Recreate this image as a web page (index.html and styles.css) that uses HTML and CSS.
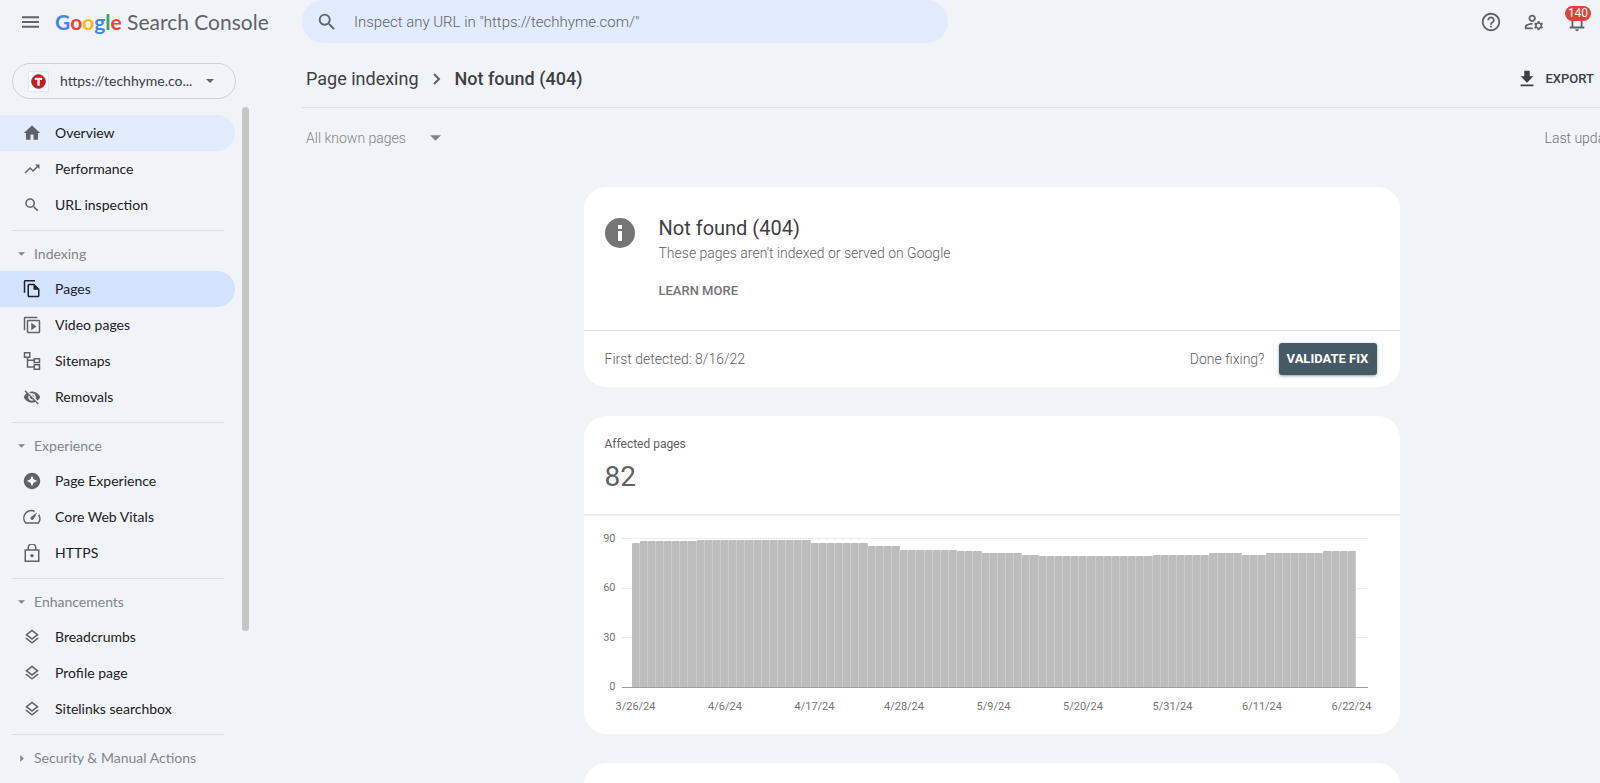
FILE: index.html
```html
<!DOCTYPE html>
<html lang="en">
<head>
<meta charset="utf-8">
<title>Page indexing - Not found (404)</title>
<link rel="stylesheet" href="styles.css">
</head>
<body>
<svg class="sprite" aria-hidden="true">
  <symbol id="search" viewBox="0 0 24 24"><path d="M15.5 14h-.79l-.28-.27A6.471 6.471 0 0 0 16 9.5 6.5 6.5 0 1 0 9.5 16c1.61 0 3.09-.59 4.23-1.57l.27.28v.79l5 4.99L20.49 19l-4.99-5zm-6 0C7.01 14 5 11.99 5 9.5S7.01 5 9.5 5 14 7.01 14 9.5 11.99 14 9.5 14z"/></symbol>
  <symbol id="layers" viewBox="0 0 24 24"><path d="M11.99 18.54l-7.37-5.73L3 14.07l9 7 9-7-1.63-1.27zM12 16l7.36-5.73L21 9l-9-7-9 7 1.63 1.27L12 16zm0-11.47L17.74 9 12 13.47 6.26 9 12 4.53z"/></symbol>
  <symbol id="down" viewBox="0 0 10 5"><path d="M0 0h10L5 5z"/></symbol>
  <symbol id="right" viewBox="0 0 5 10"><path d="M0 0v10l5-5z"/></symbol>
</svg>

<div class="app">
  <aside class="sidebar">
    <div class="brand">
      <button class="icon-button" aria-label="Main menu"><svg class="icon-menu" viewBox="0 0 18 12"><path d="M0 0h18v2H0zM0 5h18v2H0zM0 10h18v2H0z"/></svg></button>
      <a class="brand-link" href="#"><span class="google"><span class="blue">G</span><span class="red">o</span><span class="yellow">o</span><span class="blue">g</span><span class="green">l</span><span class="red">e</span></span> <span>Search Console</span></a>
    </div>
    <button class="property">
      <span class="favicon"><svg viewBox="0 0 16 16"><circle cx="8" cy="8" r="7.300" fill="#d8141c" stroke="#8f2a2c"/><path d="M4 4h8v2.500H9.300V12.500H6.700V6.500H4z" fill="#fff"/></svg></span>
      <span class="property-name">https://techhyme.co...</span>
      <svg class="caret"><use href="#down"/></svg>
    </button>
    <div class="nav-area">
      <nav class="nav">
        <a class="nav-item hover" href="#"><svg class="icon" viewBox="0 0 24 24"><path d="M10 21v-7h4v7h6v-9h3L12 2 1 12h3v9z"/></svg>Overview</a>
        <a class="nav-item" href="#"><svg class="icon" viewBox="0 0 24 24"><path d="M16 6l2.290 2.290-4.880 4.880-4-4L2 16.590 3.410 18l6-6 4 4 6.300-6.290L22 12V6z"/></svg>Performance</a>
        <a class="nav-item" href="#"><svg class="icon"><use href="#search"/></svg>URL inspection</a>

        <button class="nav-group"><span class="arrow"><svg class="tri"><use href="#down"/></svg></span>Indexing</button>
        <a class="nav-item active" href="#"><svg class="icon" viewBox="0 0 24 24"><path fill-rule="evenodd" d="M16 0H3C1.900 0 1 .9 1 2v15h2V2h13zM15 5H8C6.900 5 6 5.900 6 7v14c0 1.100.9 2 2 2h12c1.100 0 2-.9 2-2V12zM8 21V7h6v6h6v8z"/></svg>Pages</a>
        <a class="nav-item" href="#"><svg class="icon" viewBox="0 0 24 24"><path fill-rule="evenodd" d="M19 1H3C1.900 1 1 1.900 1 3v16h2V3h16zM7 5h14c1.100 0 2 .9 2 2v14c0 1.100-.9 2-2 2H7c-1.100 0-2-.9-2-2V7c0-1.100.9-2 2-2zm0 2v14h14V7zM11 9v10l7-5z"/></svg>Video pages</a>
        <a class="nav-item" href="#"><svg class="icon" viewBox="0 0 24 24"><path fill="none" stroke="currentColor" stroke-width="2" d="M2 1h7v6H2zM15 9h7v5h-7zM15 17h7v6h-7zM6 7v13h9M6 11h9"/></svg>Sitemaps</a>
        <a class="nav-item" href="#"><svg class="icon" viewBox="0 0 24 24"><path d="M12 7c2.760 0 5 2.240 5 5 0 .65-.13 1.260-.36 1.830l2.920 2.920c1.510-1.260 2.700-2.890 3.430-4.750-1.730-4.390-6-7.500-11-7.500-1.400 0-2.740.25-3.980.7l2.160 2.160C10.740 7.130 11.350 7 12 7zM2 4.270l2.280 2.280.46.46C3.080 8.300 1.780 10.020 1 12c1.730 4.390 6 7.500 11 7.500 1.550 0 3.030-.3 4.380-.84l.42.42L19.730 22 21 20.730 3.270 3 2 4.270zM7.530 9.800l1.550 1.550c-.05.21-.08.43-.08.65 0 1.660 1.340 3 3 3 .22 0 .44-.03.65-.08l1.550 1.550c-.67.33-1.410.53-2.200.53-2.760 0-5-2.240-5-5 0-.79.2-1.530.53-2.200zm4.310-.78l3.150 3.150.02-.16c0-1.660-1.340-3-3-3l-.17.01z"/></svg>Removals</a>

        <button class="nav-group"><span class="arrow"><svg class="tri"><use href="#down"/></svg></span>Experience</button>
        <a class="nav-item" href="#"><svg class="icon" viewBox="0 0 24 24"><path fill-rule="evenodd" d="M12 1a11 11 0 1 0 0 22 11 11 0 0 0 0-22zm0 4l2.200 4.800L19 12l-4.800 2.200L12 19l-2.200-4.800L5 12l4.800-2.200z"/></svg>Page Experience</a>
        <a class="nav-item" href="#"><svg class="icon" viewBox="0 0 24 24"><path fill="none" stroke="currentColor" stroke-width="2" d="M15.500 4.500A10 10 0 0 0 3.500 20h17a10 10 0 0 0 .5-11"/><path d="M19 6l-5 9a2.300 2.300 0 1 1-3.500-3z"/></svg>Core Web Vitals</a>
        <a class="nav-item" href="#"><svg class="icon" viewBox="0 0 24 24"><path fill="none" stroke="currentColor" stroke-width="2" d="M3 8h18v15H3zM7 8V5a5 5 0 0 1 10 0v3"/><circle cx="12" cy="15.500" r="2.300"/></svg>HTTPS</a>

        <button class="nav-group"><span class="arrow"><svg class="tri"><use href="#down"/></svg></span>Enhancements</button>
        <a class="nav-item" href="#"><svg class="icon"><use href="#layers"/></svg>Breadcrumbs</a>
        <a class="nav-item" href="#"><svg class="icon"><use href="#layers"/></svg>Profile page</a>
        <a class="nav-item" href="#"><svg class="icon"><use href="#layers"/></svg>Sitelinks searchbox</a>

        <button class="nav-group"><span class="arrow"><svg class="tri-right"><use href="#right"/></svg></span>Security &amp; Manual Actions</button>
      </nav>
      <div class="scrollbar"></div>
    </div>
  </aside>

  <main class="main">
    <header class="topbar">
      <label class="search"><svg class="icon-large"><use href="#search"/></svg><input type="text" aria-label="Inspect URL" placeholder='Inspect any URL in "https://techhyme.com/"'></label>
      <div class="tools">
        <button class="icon-button" aria-label="Help"><svg class="icon-tool" viewBox="0 0 24 24"><path d="M11 18h2v-2h-2v2zm1-16C6.480 2 2 6.480 2 12s4.480 10 10 10 10-4.480 10-10S17.520 2 12 2zm0 18c-4.410 0-8-3.590-8-8s3.590-8 8-8 8 3.590 8 8-3.590 8-8 8zm0-14c-2.210 0-4 1.790-4 4h2c0-1.100.9-2 2-2s2 .9 2 2c0 2-3 1.750-3 5h2c0-2.250 3-2.500 3-5 0-2.210-1.790-4-4-4z"/></svg></button>
        <button class="icon-button" aria-label="User settings"><svg class="icon-tool" viewBox="0 0 24 24"><path d="M4 18v-.65c0-.34.16-.66.41-.81C6.100 15.530 8.030 15 10 15c.03 0 .05 0 .08.01.1-.7.3-1.370.59-1.980-.22-.02-.44-.03-.67-.03-2.420 0-4.680.67-6.610 1.820-.88.52-1.390 1.500-1.390 2.530V20h9.260c-.42-.6-.75-1.280-.97-2H4zM10 12c2.210 0 4-1.790 4-4s-1.790-4-4-4-4 1.790-4 4 1.790 4 4 4zm0-6c1.100 0 2 .9 2 2s-.9 2-2 2-2-.9-2-2 .9-2 2-2zM20.750 16c0-.22-.03-.42-.06-.63l1.140-1.010-1-1.730-1.450.49c-.32-.27-.68-.48-1.080-.63L18 11h-2l-.3 1.490c-.4.15-.76.36-1.080.63l-1.450-.49-1 1.730 1.140 1.010c-.03.21-.06.41-.06.63s.03.42.06.63l-1.140 1.010 1 1.730 1.450-.49c.32.27.68.48 1.080.63L16 21h2l.3-1.490c.4-.15.76-.36 1.080-.63l1.450.49 1-1.730-1.140-1.010c.03-.21.06-.41.06-.63zM17 18c-1.100 0-2-.9-2-2s.9-2 2-2 2 .9 2 2-.9 2-2 2z"/></svg></button>
        <button class="icon-button" aria-label="Notifications"><svg class="icon-tool" viewBox="0 0 24 24"><path d="M12 22c1.100 0 2-.9 2-2h-4c0 1.100.9 2 2 2zm6-5v-6c0-3.070-1.630-5.640-4.500-6.320V4c0-.83-.67-1.500-1.500-1.500s-1.500.67-1.500 1.500v.68C7.640 5.360 6 7.920 6 11v6H4v2h16v-2zm-2 0H8v-6c0-2.480 1.510-4.500 4-4.500s4 2.020 4 4.500z"/></svg><span class="badge">140</span></button>
      </div>
    </header>

    <div class="titlebar">
      <a class="crumb" href="#">Page indexing</a>
      <svg class="chevron" viewBox="0 0 8 12"><path fill="none" stroke="currentColor" stroke-width="2" d="M1 1l5 5-5 5"/></svg>
      <h1 class="title">Not found (404)</h1>
      <button class="export"><svg class="icon-tool" viewBox="0 0 24 24"><path d="M19 9h-4V3H9v6H5l7 7 7-7zM5 18v2h14v-2H5z"/></svg>EXPORT</button>
    </div>

    <div class="content">
      <div class="filters">
        <button class="filter">All known pages<svg class="filter-caret"><use href="#down"/></svg></button>
        <span class="updated">Last updated: 6/22/24</span>
      </div>

      <div class="cards">
        <section class="card">
          <div class="summary">
            <svg class="info" viewBox="0 0 30 30"><circle cx="15" cy="15" r="15"/><path fill="#fff" d="M13 7h4v4h-4zM13 13h4v10h-4z"/></svg>
            <div>
              <h2 class="card-title">Not found (404)</h2>
              <p class="card-text">These pages aren't indexed or served on Google</p>
              <a class="learn" href="#">LEARN MORE</a>
            </div>
          </div>
          <div class="actions">
            <span>First detected: 8/16/22</span>
            <span class="done">Done fixing?</span>
            <button class="validate">VALIDATE FIX</button>
          </div>
        </section>

        <section class="card">
          <div class="metric">
            <h2 class="metric-name">Affected pages</h2>
            <p class="metric-value">82</p>
          </div>
          <div class="chart">
            <div class="y-axis"><span>90</span><span>60</span><span>30</span><span>0</span></div>
            <div class="grid-lines"><i></i><i></i><i></i><i></i></div>
            <div class="bars" id="bars"></div>
            <div class="x-axis"><span>3/26/24</span><span>4/6/24</span><span>4/17/24</span><span>4/28/24</span><span>5/9/24</span><span>5/20/24</span><span>5/31/24</span><span>6/11/24</span><span>6/22/24</span></div>
          </div>
        </section>

        <section class="card next"></section>
      </div>
    </div>
  </main>
</div>
<script src="chart.js"></script>
</body>
</html>
```
FILE: styles.css
```css
* { box-sizing: border-box; }

body {
  margin: 0;
  background: #f0f3f8;
  color: #3c4043;
  font: 14px/20px Roboto, sans-serif;
}

button {
  margin: 0;
  padding: 0;
  border: 0;
  background: none;
  color: inherit;
  font: inherit;
  text-align: left;
  cursor: pointer;
}

a { color: inherit; text-decoration: none; }
h1, h2, p { margin: 0; font-weight: 400; }
svg { display: block; flex: none; fill: currentColor; }
.sprite { position: absolute; width: 0; height: 0; }

.app {
  display: grid;
  grid-template-columns: 302px minmax(0, 1fr);
  height: 100vh;
  overflow: hidden;
}

/* Sidebar */
.sidebar {
  display: flex;
  flex-direction: column;
  min-height: 0;
  font-family: Lato, sans-serif;
}

.brand {
  display: flex;
  align-items: center;
  gap: 16px;
  height: 44px;
  padding-left: 22px;
  color: #5f6368;
}
.icon-button { position: relative; }
.icon-menu { width: 17px; height: 12px; }
.brand-link {
  font-size: 21px;
  line-height: 28px;
  white-space: nowrap;
}
.google { font-weight: 700; }
.blue { color: #4285f4; }
.red { color: #ea4335; }
.yellow { color: #fbbc05; }
.green { color: #34a853; }

.property {
  display: flex;
  align-items: center;
  width: 224px;
  height: 36px;
  margin: 19px 0 8px 12px;
  padding: 0 21px 0 15px;
  border: 1px solid #cdd0d5;
  border-radius: 18px;
}
.favicon {
  padding: 2px;
  border: 1px solid #e4e6e8;
  background: #fff;
}
.favicon svg { width: 15px; height: 15px; }
.property-name { flex: 1; padding-left: 11px; }
.caret { width: 8px; height: 4px; color: #5f6368; }

.nav-area { display: flex; flex: 1; min-height: 0; gap: 7px; }
.nav {
  width: 235px;
  padding-top: 8px;
  overflow: hidden;
  color: #202124;
}
.nav-item {
  display: flex;
  align-items: center;
  gap: 14px;
  height: 36px;
  padding-left: 23px;
  border-radius: 0 18px 18px 0;
}
.nav-item.hover { background: #e1ebfc; }
.nav-item.active { background: #d3e3fd; }
.icon { width: 18px; height: 18px; color: #5f6368; }
.active .icon { color: #202124; }
.nav-group {
  display: flex;
  align-items: center;
  width: 212px;
  height: 41px;
  margin: 7px 0 0 12px;
  padding: 6px 0 0 6px;
  border-top: 1px solid #dcdfe3;
  color: #80868b;
}
.arrow { display: flex; width: 16px; }
.tri { width: 7px; height: 4px; }
.tri-right { width: 4px; height: 7px; margin-left: 2px; }
.scrollbar {
  width: 7px;
  height: 524px;
  border-radius: 4px;
  background: #c4c6c6;
}

/* Main column */
.main { overflow: hidden; }
.topbar {
  display: flex;
  align-items: center;
  justify-content: space-between;
  height: 43px;
  padding-right: 12px;
}
.search {
  display: flex;
  align-items: center;
  gap: 14px;
  flex: 0 1 646px;
  height: 43px;
  padding: 0 14px;
  border-radius: 22px;
  background: #e1ebfc;
  color: #5f6368;
}
.icon-large { width: 22px; height: 22px; }
.search input {
  flex: 1;
  padding: 0 2px;
  border: 0;
  outline: 0;
  background: none;
  font: 300 15px/20px Roboto, sans-serif;
}
.search input::placeholder { color: #5f6368; opacity: 1; }
.tools { display: flex; gap: 21px; color: #5f6368; }
.icon-tool { width: 22px; height: 22px; }
.badge {
  position: absolute;
  top: -5px;
  left: -1px;
  width: 26px;
  border-radius: 8px;
  background: #db4437;
  color: #fff;
  font-size: 12px;
  line-height: 15px;
  text-align: center;
}

.titlebar {
  display: flex;
  align-items: center;
  height: 65px;
  padding: 8px 6px 0 4px;
  border-bottom: 1px solid #dcdfe3;
}
.crumb, .title { font-size: 18px; line-height: 24px; }
.title { font-weight: 500; }
.chevron { width: 8px; height: 12px; margin: 0 14px; color: #5f6368; }
.export {
  display: flex;
  align-items: center;
  gap: 8px;
  margin-left: auto;
  font-size: 13px;
  font-weight: 500;
}

.content { margin-right: -81px; }
.filters {
  display: flex;
  align-items: center;
  justify-content: space-between;
  height: 59px;
  padding-left: 4px;
  color: #70757a;
  font-weight: 300;
}
.filter { display: flex; align-items: center; gap: 24px; color: #80868b; }
.filter-caret { width: 11px; height: 6px; }

.cards {
  display: flex;
  flex-direction: column;
  gap: 29px;
  max-width: 816px;
  margin: 20px auto 0;
}
.card {
  border-radius: 22px;
  background: #fff;
  color: #616161;
}
.summary { display: flex; gap: 24px; padding: 28px 21px 29px; }
.info { width: 30px; height: 30px; margin-top: 3px; color: #757575; }
.card-title { color: #3c4043; font-size: 20px; line-height: 26px; }
.card-text { font-weight: 300; line-height: 24px; }
.learn {
  display: block;
  margin-top: 16px;
  color: #757575;
  font-size: 13px;
  font-weight: 500;
}
.actions {
  display: flex;
  align-items: center;
  padding: 12px 23px 12px 21px;
  border-top: 1px solid #dcdfe3;
  font-weight: 300;
}
.done { margin-left: auto; }
.validate {
  width: 98px;
  height: 32px;
  margin-left: 14px;
  border-radius: 3px;
  background: #455a64;
  box-shadow: 0 1px 3px rgb(0 0 0 / 40%);
  color: #fff;
  font-size: 13px;
  font-weight: 700;
  text-align: center;
}

.metric { padding: 20px 21px 21px; border-bottom: 2px solid #ebebeb; }
.metric-name { font-size: 12px; line-height: 16px; }
.metric-value { font-size: 28px; line-height: 32px; margin-top: 9px; }

.chart {
  display: grid;
  grid-template: 150px 38px / 16px 1fr;
  column-gap: 6px;
  padding: 22px 32px 8px 16px;
  color: #757575;
  font-size: 11px;
  line-height: 14px;
}
.y-axis, .grid-lines {
  display: flex;
  flex-direction: column;
  justify-content: space-between;
}
.y-axis { margin: -6px 0; text-align: right; }
.grid-lines { grid-area: 1 / 2; }
.grid-lines i { height: 1px; background: #ebebeb; }
.grid-lines i:last-child { background: #9e9e9e; }
.bars {
  grid-area: 1 / 2;
  display: flex;
  align-items: flex-end;
  padding: 0 12px 1px 10px;
}
.bars span {
  flex: 1;
  border-right: 1px solid #cccccc;
  border-radius: 1px 1px 0 0;
  background: #bdbdbd;
}
.x-axis {
  grid-area: 2 / 2;
  display: flex;
  justify-content: space-between;
  padding: 12px 16px 0 14px;
}
.x-axis span { display: flex; justify-content: center; width: 0; }

.next { height: 200px; }
```
FILE: chart.js
```js
// Runs of [affected pages, number of days], one bar per day.
const runs = [
  [87, 1], [88, 7], [89, 14], [87, 7], [85, 4], [83, 7], [82, 3], [81, 5],
  [80, 2], [79, 14], [80, 7], [81, 4], [80, 3], [81, 7], [82, 4]
];
const axisMax = 90;
const bars = document.getElementById("bars");

for (const [pages, days] of runs) {
  for (let day = 0; day < days; day++) {
    const bar = document.createElement("span");
    bar.style.height = `${pages / axisMax * 100}%`;
    bars.append(bar);
  }
}
```
